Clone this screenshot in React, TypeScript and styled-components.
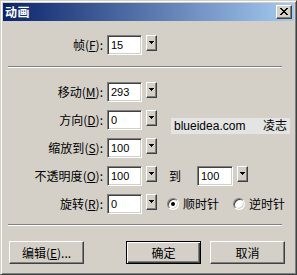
import styled, { createGlobalStyle } from 'styled-components'

const GlobalStyle = createGlobalStyle`
  html, body {
    margin: 0;
    padding: 0;
    background: #d4d0c8;
  }
  body {
    font-family: "Noto Sans CJK SC", "Liberation Sans", sans-serif;
    font-size: 12px;
    color: #000;
  }
`

const Window = styled.div`
  box-sizing: border-box;
  width: 297px;
  height: 275px;
  padding: 2px;
  background: #d4d0c8;
  border: 1px solid;
  border-color: #d4d0c8 #404040 #404040 #d4d0c8;
  box-shadow: inset 1px 1px #fff, inset -1px -1px #808080;
  display: flex;
  flex-direction: column;
`

const TitleBar = styled.div`
  height: 18px;
  flex: none;
  display: flex;
  align-items: center;
  justify-content: space-between;
  padding: 0 2px;
  background: linear-gradient(to right, #0a246a, #a6caf0);
`

const Title = styled.span`
  color: #fff;
  font-weight: 700;
  font-size: 12px;
  line-height: 18px;
  letter-spacing: 0.5px;
`

const CloseButton = styled.div`
  box-sizing: border-box;
  width: 16px;
  height: 14px;
  display: flex;
  align-items: center;
  justify-content: center;
  background: #d4d0c8;
  border: 1px solid;
  border-color: #fff #404040 #404040 #fff;
  box-shadow: inset -1px -1px #808080;
  svg {
    display: block;
    margin: 0 1px 1px 0;
  }
`

const Body = styled.div`
  display: flex;
  flex-direction: column;
  padding-left: 5px;
`

const FieldGrid = styled.div<{ $top: number }>`
  display: grid;
  grid-template-columns: 95px 35px 11px 1fr;
  grid-auto-rows: 20px;
  column-gap: 4px;
  row-gap: 8px;
  align-items: center;
  margin-top: ${(p) => p.$top}px;
`

const Label = styled.div`
  grid-column: 1;
  text-align: right;
  white-space: nowrap;
  line-height: 14px;
  u {
    text-decoration: underline;
    text-underline-offset: 1px;
  }
`

const Field = styled.div<{ $width?: number }>`
  box-sizing: border-box;
  width: ${(p) => p.$width ?? 35}px;
  height: 20px;
  padding-left: 3px;
  background: #fff;
  border: 1px solid;
  border-color: #808080 #fff #fff #808080;
  box-shadow: inset 1px 1px #404040, inset -1px -1px #d4d0c8;
  font-family: "Liberation Sans", sans-serif;
  font-size: 11px;
  line-height: 18px;
`

const SpinButton = styled.div`
  box-sizing: border-box;
  width: 11px;
  height: 16px;
  align-self: start;
  display: flex;
  align-items: center;
  justify-content: center;
  background: #d4d0c8;
  border: 1px solid;
  border-color: #fff #404040 #404040 #fff;
  box-shadow: inset -1px -1px #808080;
  svg {
    display: block;
    margin: 0 1px 1px 0;
  }
`

const Separator = styled.div<{ $top: number }>`
  width: 274px;
  height: 0;
  margin-top: ${(p) => p.$top}px;
  border-top: 1px solid #808080;
  border-bottom: 1px solid #fff;
`

const InfoBox = styled.div`
  grid-column: 4;
  grid-row: 2 / span 2;
  align-self: start;
  margin: 8px 0 0 10px;
  width: 119px;
  height: 16px;
  box-sizing: border-box;
  display: flex;
  align-items: center;
  justify-content: space-between;
  padding: 0 3px 0 3px;
  background: #e4e4e4;
  font-family: "Liberation Sans", "Noto Sans CJK SC", sans-serif;
  font-size: 12px;
  line-height: 16px;
`

const Inline = styled.div<{ $left: number }>`
  grid-column: 4;
  display: flex;
  align-items: center;
  margin-left: ${(p) => p.$left}px;
  gap: 4px;
`

const ToWord = styled.span`
  width: 24px;
  line-height: 14px;
`

const Radio = styled.span<{ $checked?: boolean }>`
  box-sizing: border-box;
  width: 12px;
  height: 12px;
  border-radius: 50%;
  border: 1px solid;
  border-color: #808080 #fff #fff #808080;
  box-shadow: inset 1px 1px #404040, inset -1px -1px #d4d0c8;
  background: #fff;
  display: flex;
  align-items: center;
  justify-content: center;
  &::after {
    content: '';
    width: 4px;
    height: 4px;
    border-radius: 50%;
    background: ${(p) => (p.$checked ? '#000' : 'transparent')};
  }
`

const RadioLabel = styled.span<{ $gap: number }>`
  line-height: 14px;
  margin-right: ${(p) => p.$gap}px;
`

const ButtonRow = styled.div`
  display: flex;
  margin: 15px 0 0 1px;
  width: 276px;
`

const Button = styled.div<{ $default?: boolean }>`
  box-sizing: border-box;
  width: 75px;
  height: 23px;
  display: flex;
  align-items: center;
  justify-content: center;
  line-height: 14px;
  background: #d4d0c8;
  border: 1px solid;
  border-color: ${(p) => (p.$default ? '#000' : '#fff #404040 #404040 #fff')};
  box-shadow: ${(p) =>
    p.$default
      ? 'inset 1px 1px #fff, inset -1px -1px #404040, inset -2px -2px #808080'
      : 'inset -1px -1px #808080'};
  u {
    text-decoration: underline;
    text-underline-offset: 1px;
  }
`

const Spacer = styled.div<{ $width?: number }>`
  flex: ${(p) => (p.$width ? 'none' : '1')};
  width: ${(p) => p.$width ?? 0}px;
`

const Arrow = () => (
  <svg width="5" height="3" viewBox="0 0 5 3" shapeRendering="crispEdges">
    <path d="M0 0h5v1H0zM1 1h3v1H1zM2 2h1v1H2z" fill="#000" />
  </svg>
)

const CloseGlyph = () => (
  <svg width="8" height="7" viewBox="0 0 8 7" shapeRendering="crispEdges">
    <path
      d="M0 0h2v1H0zM6 0h2v1H6zM1 1h2v1H1zM5 1h2v1H5zM2 2h4v1H2zM3 3h2v1H3zM2 4h4v1H2zM1 5h2v1H1zM5 5h2v1H5zM0 6h2v1H0zM6 6h2v1H6z"
      fill="#000"
    />
  </svg>
)

type Row = { name: string; key: string; value: string }

const rows: Row[] = [
  { name: '移动', key: 'M', value: '293' },
  { name: '方向', key: 'D', value: '0' },
  { name: '缩放到', key: 'S', value: '100' },
  { name: '不透明度', key: 'O', value: '100' },
  { name: '旋转', key: 'R', value: '0' },
]

const FieldLabel = ({ name, k }: { name: string; k: string }) => (
  <Label>
    {name}(<u>{k}</u>):
  </Label>
)

const FieldRow = ({ row, index }: { row: Row; index: number }) => (
  <>
    <FieldLabel name={row.name} k={row.key} />
    <Field>{row.value}</Field>
    <SpinButton>
      <Arrow />
    </SpinButton>
    {index === 3 && (
      <Inline $left={8}>
        <ToWord>到</ToWord>
        <Field $width={36}>100</Field>
        <SpinButton>
          <Arrow />
        </SpinButton>
      </Inline>
    )}
    {index === 4 && (
      <Inline $left={6}>
        <Radio $checked />
        <RadioLabel $gap={10}>顺时针</RadioLabel>
        <Radio />
        <RadioLabel $gap={0}>逆时针</RadioLabel>
      </Inline>
    )}
  </>
)

export default function App() {
  return (
    <>
      <GlobalStyle />
      <Window>
        <TitleBar>
          <Title>动画</Title>
          <CloseButton>
            <CloseGlyph />
          </CloseButton>
        </TitleBar>
        <Body>
          <FieldGrid $top={14}>
            <FieldLabel name="帧" k="F" />
            <Field>15</Field>
            <SpinButton>
              <Arrow />
            </SpinButton>
          </FieldGrid>

          <Separator $top={11} />

          <FieldGrid $top={14}>
            {rows.map((r, i) => (
              <FieldRow key={r.key} row={r} index={i} />
            ))}
            <InfoBox>
              <span>blueidea.com</span>
              <span>凌志</span>
            </InfoBox>
          </FieldGrid>

          <Separator $top={10} />

          <ButtonRow>
            <Button>
              编辑(<u>E</u>)...
            </Button>
            <Spacer />
            <Button $default>确定</Button>
            <Spacer $width={9} />
            <Button>取消</Button>
          </ButtonRow>
        </Body>
      </Window>
    </>
  )
}
